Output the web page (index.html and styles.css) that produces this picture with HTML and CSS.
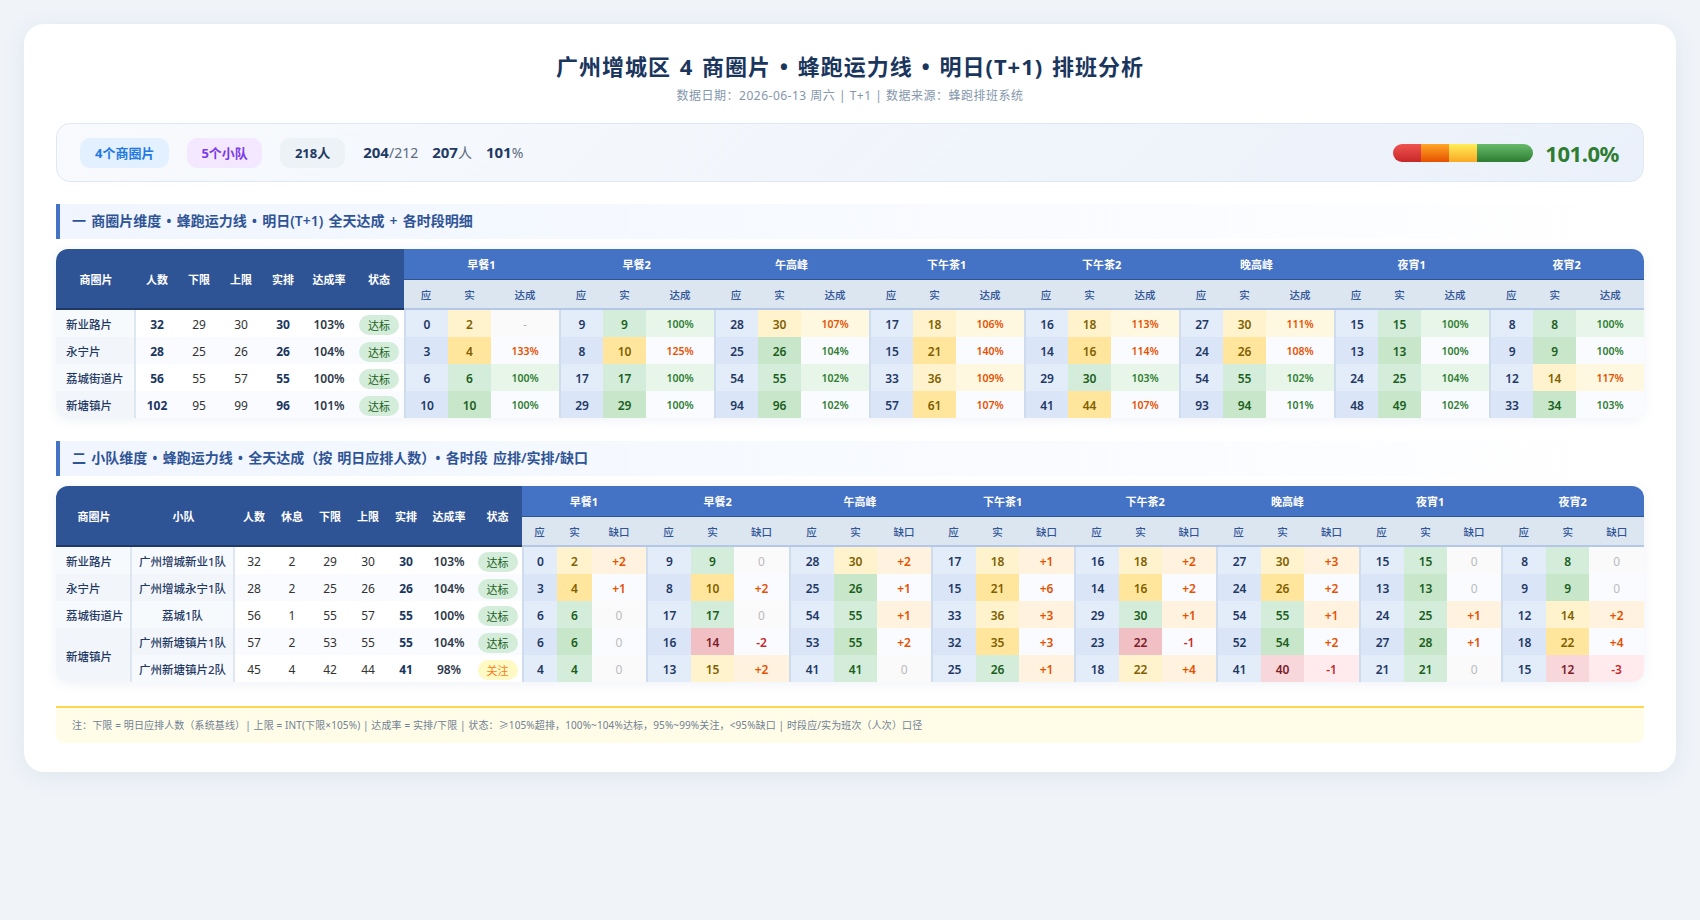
FILE: index.html
```html
<!DOCTYPE html>
<html lang="zh-CN">
<head>
<meta charset="utf-8">
<title>排班分析</title>
<link rel="stylesheet" href="styles.css">
</head>
<body>
<main class="card">
<h1 class="title">广州增城区 4 商圈片 • 蜂跑运力线 • 明日(T+1) 排班分析</h1>
<p class="subtitle">数据日期：2026-06-13 周六 | T+1 | 数据来源：蜂跑排班系统</p>

<section class="summary">
  <div class="chips">
    <span class="pill pill-blue">4个商圈片</span>
    <span class="pill pill-purple">5个小队</span>
    <span class="pill pill-gray">218人</span>
    <span class="stat"><b>204</b>/212</span>
    <span class="stat"><b>207</b>人</span>
    <span class="stat"><b>101</b>%</span>
  </div>
  <div class="gauge">
    <div class="bar"><i class="seg seg-red"></i><i class="seg seg-orange"></i><i class="seg seg-yellow"></i><i class="seg seg-green"></i></div>
    <span class="gauge-value">101.0%</span>
  </div>
</section>

<h2 class="section-title">一 商圈片维度 • 蜂跑运力线 • 明日(T+1) 全天达成 + 各时段明细</h2>
<div class="table-wrap">
<table class="grid">
<colgroup>
<col class="w80"><col class="w42"><col class="w42"><col class="w42"><col class="w42"><col class="w50"><col class="w50">
<col class="w44"><col class="w43"><col class="w68"><col class="w44"><col class="w43"><col class="w68"><col class="w44"><col class="w43"><col class="w68"><col class="w44"><col class="w43"><col class="w68"><col class="w44"><col class="w43"><col class="w68"><col class="w44"><col class="w43"><col class="w68"><col class="w44"><col class="w43"><col class="w68"><col class="w44"><col class="w43"><col class="w68">
</colgroup>
<thead>
<tr>
<th class="h-main" rowspan="2">商圈片</th><th class="h-main" rowspan="2">人数</th><th class="h-main" rowspan="2">下限</th><th class="h-main" rowspan="2">上限</th><th class="h-main" rowspan="2">实排</th><th class="h-main" rowspan="2">达成率</th><th class="h-main" rowspan="2">状态</th>
<th class="h-group" colspan="3">早餐1</th><th class="h-group" colspan="3">早餐2</th><th class="h-group" colspan="3">午高峰</th><th class="h-group" colspan="3">下午茶1</th><th class="h-group" colspan="3">下午茶2</th><th class="h-group" colspan="3">晚高峰</th><th class="h-group" colspan="3">夜宵1</th><th class="h-group" colspan="3">夜宵2</th>
</tr>
<tr>
<th class="h-sub">应</th><th class="h-sub">实</th><th class="h-sub">达成</th><th class="h-sub">应</th><th class="h-sub">实</th><th class="h-sub">达成</th><th class="h-sub">应</th><th class="h-sub">实</th><th class="h-sub">达成</th><th class="h-sub">应</th><th class="h-sub">实</th><th class="h-sub">达成</th><th class="h-sub">应</th><th class="h-sub">实</th><th class="h-sub">达成</th><th class="h-sub">应</th><th class="h-sub">实</th><th class="h-sub">达成</th><th class="h-sub">应</th><th class="h-sub">实</th><th class="h-sub">达成</th><th class="h-sub">应</th><th class="h-sub">实</th><th class="h-sub">达成</th>
</tr>
</thead>
<tbody>
<tr>
<td class="name">新业路片</td><td class="bold">32</td><td>29</td><td>30</td><td class="bold">30</td><td class="rate">103%</td><td><span class="badge ok">达标</span></td>
<td class="ying">0</td><td class="act a-y">2</td><td class="r-na">-</td>
<td class="ying">9</td><td class="act a-g">9</td><td class="r-g">100%</td>
<td class="ying">28</td><td class="act a-y">30</td><td class="r-y">107%</td>
<td class="ying">17</td><td class="act a-y">18</td><td class="r-y">106%</td>
<td class="ying">16</td><td class="act a-y">18</td><td class="r-y">113%</td>
<td class="ying">27</td><td class="act a-y">30</td><td class="r-y">111%</td>
<td class="ying">15</td><td class="act a-g">15</td><td class="r-g">100%</td>
<td class="ying">8</td><td class="act a-g">8</td><td class="r-g">100%</td>
</tr>
<tr>
<td class="name">永宁片</td><td class="bold">28</td><td>25</td><td>26</td><td class="bold">26</td><td class="rate">104%</td><td><span class="badge ok">达标</span></td>
<td class="ying">3</td><td class="act a-y">4</td><td class="r-y">133%</td>
<td class="ying">8</td><td class="act a-y">10</td><td class="r-y">125%</td>
<td class="ying">25</td><td class="act a-g">26</td><td class="r-g">104%</td>
<td class="ying">15</td><td class="act a-y">21</td><td class="r-y">140%</td>
<td class="ying">14</td><td class="act a-y">16</td><td class="r-y">114%</td>
<td class="ying">24</td><td class="act a-y">26</td><td class="r-y">108%</td>
<td class="ying">13</td><td class="act a-g">13</td><td class="r-g">100%</td>
<td class="ying">9</td><td class="act a-g">9</td><td class="r-g">100%</td>
</tr>
<tr>
<td class="name">荔城街道片</td><td class="bold">56</td><td>55</td><td>57</td><td class="bold">55</td><td class="rate">100%</td><td><span class="badge ok">达标</span></td>
<td class="ying">6</td><td class="act a-g">6</td><td class="r-g">100%</td>
<td class="ying">17</td><td class="act a-g">17</td><td class="r-g">100%</td>
<td class="ying">54</td><td class="act a-g">55</td><td class="r-g">102%</td>
<td class="ying">33</td><td class="act a-y">36</td><td class="r-y">109%</td>
<td class="ying">29</td><td class="act a-g">30</td><td class="r-g">103%</td>
<td class="ying">54</td><td class="act a-g">55</td><td class="r-g">102%</td>
<td class="ying">24</td><td class="act a-g">25</td><td class="r-g">104%</td>
<td class="ying">12</td><td class="act a-y">14</td><td class="r-y">117%</td>
</tr>
<tr>
<td class="name">新塘镇片</td><td class="bold">102</td><td>95</td><td>99</td><td class="bold">96</td><td class="rate">101%</td><td><span class="badge ok">达标</span></td>
<td class="ying">10</td><td class="act a-g">10</td><td class="r-g">100%</td>
<td class="ying">29</td><td class="act a-g">29</td><td class="r-g">100%</td>
<td class="ying">94</td><td class="act a-g">96</td><td class="r-g">102%</td>
<td class="ying">57</td><td class="act a-y">61</td><td class="r-y">107%</td>
<td class="ying">41</td><td class="act a-y">44</td><td class="r-y">107%</td>
<td class="ying">93</td><td class="act a-g">94</td><td class="r-g">101%</td>
<td class="ying">48</td><td class="act a-g">49</td><td class="r-g">102%</td>
<td class="ying">33</td><td class="act a-g">34</td><td class="r-g">103%</td>
</tr>
</tbody>
</table>
</div>

<h2 class="section-title">二 小队维度 • 蜂跑运力线 • 全天达成（按 明日应排人数）• 各时段 应排/实排/缺口</h2>
<div class="table-wrap">
<table class="grid grid-team">
<colgroup>
<col class="w76"><col class="w103"><col class="w38"><col class="w38"><col class="w38"><col class="w38"><col class="w38"><col class="w48"><col class="w49">
<col class="w35"><col class="w35"><col class="w54"><col class="w45"><col class="w43"><col class="w55"><col class="w45"><col class="w43"><col class="w54"><col class="w45"><col class="w43"><col class="w55"><col class="w45"><col class="w43"><col class="w54"><col class="w45"><col class="w43"><col class="w55"><col class="w45"><col class="w43"><col class="w54"><col class="w45"><col class="w43"><col class="w55">
</colgroup>
<thead>
<tr>
<th class="h-main" rowspan="2">商圈片</th><th class="h-main" rowspan="2">小队</th><th class="h-main" rowspan="2">人数</th><th class="h-main" rowspan="2">休息</th><th class="h-main" rowspan="2">下限</th><th class="h-main" rowspan="2">上限</th><th class="h-main" rowspan="2">实排</th><th class="h-main" rowspan="2">达成率</th><th class="h-main" rowspan="2">状态</th>
<th class="h-group" colspan="3">早餐1</th><th class="h-group" colspan="3">早餐2</th><th class="h-group" colspan="3">午高峰</th><th class="h-group" colspan="3">下午茶1</th><th class="h-group" colspan="3">下午茶2</th><th class="h-group" colspan="3">晚高峰</th><th class="h-group" colspan="3">夜宵1</th><th class="h-group" colspan="3">夜宵2</th>
</tr>
<tr>
<th class="h-sub">应</th><th class="h-sub">实</th><th class="h-sub">缺口</th><th class="h-sub">应</th><th class="h-sub">实</th><th class="h-sub">缺口</th><th class="h-sub">应</th><th class="h-sub">实</th><th class="h-sub">缺口</th><th class="h-sub">应</th><th class="h-sub">实</th><th class="h-sub">缺口</th><th class="h-sub">应</th><th class="h-sub">实</th><th class="h-sub">缺口</th><th class="h-sub">应</th><th class="h-sub">实</th><th class="h-sub">缺口</th><th class="h-sub">应</th><th class="h-sub">实</th><th class="h-sub">缺口</th><th class="h-sub">应</th><th class="h-sub">实</th><th class="h-sub">缺口</th>
</tr>
</thead>
<tbody>
<tr>
<td class="name">新业路片</td><td class="team">广州增城新业1队</td><td>32</td><td>2</td><td>29</td><td>30</td><td class="bold">30</td><td class="rate">103%</td><td><span class="badge ok">达标</span></td>
<td class="ying">0</td><td class="act a-y">2</td><td class="gap-p">+2</td>
<td class="ying">9</td><td class="act a-g">9</td><td class="gap-z">0</td>
<td class="ying">28</td><td class="act a-y">30</td><td class="gap-p">+2</td>
<td class="ying">17</td><td class="act a-y">18</td><td class="gap-p">+1</td>
<td class="ying">16</td><td class="act a-y">18</td><td class="gap-p">+2</td>
<td class="ying">27</td><td class="act a-y">30</td><td class="gap-p">+3</td>
<td class="ying">15</td><td class="act a-g">15</td><td class="gap-z">0</td>
<td class="ying">8</td><td class="act a-g">8</td><td class="gap-z">0</td>
</tr>
<tr>
<td class="name">永宁片</td><td class="team">广州增城永宁1队</td><td>28</td><td>2</td><td>25</td><td>26</td><td class="bold">26</td><td class="rate">104%</td><td><span class="badge ok">达标</span></td>
<td class="ying">3</td><td class="act a-y">4</td><td class="gap-p">+1</td>
<td class="ying">8</td><td class="act a-y">10</td><td class="gap-p">+2</td>
<td class="ying">25</td><td class="act a-g">26</td><td class="gap-p">+1</td>
<td class="ying">15</td><td class="act a-y">21</td><td class="gap-p">+6</td>
<td class="ying">14</td><td class="act a-y">16</td><td class="gap-p">+2</td>
<td class="ying">24</td><td class="act a-y">26</td><td class="gap-p">+2</td>
<td class="ying">13</td><td class="act a-g">13</td><td class="gap-z">0</td>
<td class="ying">9</td><td class="act a-g">9</td><td class="gap-z">0</td>
</tr>
<tr>
<td class="name">荔城街道片</td><td class="team">荔城1队</td><td>56</td><td>1</td><td>55</td><td>57</td><td class="bold">55</td><td class="rate">100%</td><td><span class="badge ok">达标</span></td>
<td class="ying">6</td><td class="act a-g">6</td><td class="gap-z">0</td>
<td class="ying">17</td><td class="act a-g">17</td><td class="gap-z">0</td>
<td class="ying">54</td><td class="act a-g">55</td><td class="gap-p">+1</td>
<td class="ying">33</td><td class="act a-y">36</td><td class="gap-p">+3</td>
<td class="ying">29</td><td class="act a-g">30</td><td class="gap-p">+1</td>
<td class="ying">54</td><td class="act a-g">55</td><td class="gap-p">+1</td>
<td class="ying">24</td><td class="act a-g">25</td><td class="gap-p">+1</td>
<td class="ying">12</td><td class="act a-y">14</td><td class="gap-p">+2</td>
</tr>
<tr>
<td class="name name-span" rowspan="2">新塘镇片</td><td class="team">广州新塘镇片1队</td><td>57</td><td>2</td><td>53</td><td>55</td><td class="bold">55</td><td class="rate">104%</td><td><span class="badge ok">达标</span></td>
<td class="ying">6</td><td class="act a-g">6</td><td class="gap-z">0</td>
<td class="ying">16</td><td class="act a-r">14</td><td class="gap-n">-2</td>
<td class="ying">53</td><td class="act a-g">55</td><td class="gap-p">+2</td>
<td class="ying">32</td><td class="act a-y">35</td><td class="gap-p">+3</td>
<td class="ying">23</td><td class="act a-r">22</td><td class="gap-n">-1</td>
<td class="ying">52</td><td class="act a-g">54</td><td class="gap-p">+2</td>
<td class="ying">27</td><td class="act a-g">28</td><td class="gap-p">+1</td>
<td class="ying">18</td><td class="act a-y">22</td><td class="gap-p">+4</td>
</tr>
<tr>
<td class="team">广州新塘镇片2队</td><td>45</td><td>4</td><td>42</td><td>44</td><td class="bold">41</td><td class="rate">98%</td><td><span class="badge warn">关注</span></td>
<td class="ying">4</td><td class="act a-g">4</td><td class="gap-z">0</td>
<td class="ying">13</td><td class="act a-y">15</td><td class="gap-p">+2</td>
<td class="ying">41</td><td class="act a-g">41</td><td class="gap-z">0</td>
<td class="ying">25</td><td class="act a-g">26</td><td class="gap-p">+1</td>
<td class="ying">18</td><td class="act a-y">22</td><td class="gap-p">+4</td>
<td class="ying">41</td><td class="act a-r">40</td><td class="gap-n">-1</td>
<td class="ying">21</td><td class="act a-g">21</td><td class="gap-z">0</td>
<td class="ying">15</td><td class="act a-r">12</td><td class="gap-n">-3</td>
</tr>
</tbody>
</table>
</div>

<footer class="note">注：下限 = 明日应排人数（系统基线）| 上限 = INT(下限×105%) | 达成率 = 实排/下限 | 状态：≥105%超排，100%~104%达标，95%~99%关注，&lt;95%缺口 | 时段应/实为班次（人次）口径</footer>
</main>
</body>
</html>
```

FILE: styles.css
```css
* { box-sizing: border-box; }
html, body { margin: 0; }
body {
  min-height: 920px;
  padding: 24px;
  background: #f0f4f9;
  font-family: "Noto Sans", "Noto Sans CJK SC", sans-serif;
  color: #2d3748;
}
.card {
  background: #fff;
  border-radius: 20px;
  padding: 26px 32px 29px;
  box-shadow: 0 4px 24px rgba(30, 60, 110, .08);
}
.title {
  margin: 0;
  text-align: center;
  font-size: 22px;
  line-height: 33px;
  font-weight: 700;
  letter-spacing: 1px;
  word-spacing: 2px;
  color: #1a365d;
}
.subtitle {
  margin: 4px 0 18px;
  text-align: center;
  font-size: 12px;
  line-height: 18px;
  letter-spacing: .5px;
  color: #8496ab;
}
.summary {
  display: flex;
  align-items: center;
  justify-content: space-between;
  height: 59px;
  padding: 0 24px 0 23px;
  border: 1px solid #dfe7f3;
  border-radius: 14px;
  background: linear-gradient(135deg, #f8fafd, #ebf1fa);
}
.chips { display: flex; align-items: center; }
.pill {
  display: flex;
  align-items: center;
  height: 30px;
  padding: 0 14px 1px;
  margin-right: 18px;
  border-radius: 10px;
  font-size: 13px;
  font-weight: 700;
}
.pill-blue { padding: 0 15px 1px; background: #e3f0ff; color: #2379e3; }
.pill-purple { background: #f3e8ff; color: #7c3aed; }
.pill-gray { padding: 0 15px 1px; background: #edf2f7; color: #1f3a63; }
.stat {
  margin: 0 14px 2px 0;
  font-size: 14px;
  color: #5a6b80;
}
.stat b { font-size: 15px; color: #1f3a63; }
.gauge { display: flex; align-items: center; gap: 12px; }
.bar {
  display: flex;
  width: 140px;
  height: 18px;
  border-radius: 9px;
  overflow: hidden;
}
.seg { display: block; flex: 1; }
.seg-red { background: linear-gradient(#ef5350, #c62828); }
.seg-orange { background: linear-gradient(#ffa726, #e65100); }
.seg-yellow { background: linear-gradient(#ffee58, #f9a825); }
.seg-green { flex: 2; background: linear-gradient(#66bb6a, #2e7d32); }
.gauge-value {
  font-size: 22px;
  font-weight: 700;
  letter-spacing: -.45px;
  color: #2e7d32;
}
.section-title {
  margin: 22px 0 10px;
  height: 35px;
  padding-left: 12px;
  border-left: 4px solid #4472c4;
  background: linear-gradient(90deg, #f0f5ff, #fff);
  font-size: 14px;
  font-weight: 600;
  line-height: 34px;
  word-spacing: 1.5px;
  color: #2f5496;
}
.table-wrap + .section-title { margin-top: 23px; }
.table-wrap {
  border-radius: 12px;
  overflow: hidden;
  box-shadow: 0 2px 12px rgba(47, 84, 150, .08);
}
.grid {
  width: 100%;
  table-layout: fixed;
  border-collapse: separate;
  border-spacing: 0;
  font-size: 12px;
  text-align: center;
}
.w35 { width: 35px; } .w38 { width: 38px; } .w42 { width: 42px; } .w43 { width: 43px; }
.w44 { width: 44px; } .w45 { width: 45px; } .w48 { width: 48px; } .w49 { width: 49px; }
.w50 { width: 50px; } .w54 { width: 54px; } .w55 { width: 55px; } .w68 { width: 68px; }
.w76 { width: 76px; } .w80 { width: 80px; } .w103 { width: 103px; }
th { padding: 0; font-size: 11px; font-weight: 700; }
.h-main {
  background: #2f5496;
  color: #fff;
  border-bottom: 2px solid #1f3864;
}
.h-group {
  height: 31px;
  background: #4472c4;
  color: #fff;
  border-bottom: 1px solid #2f5496;
}
.h-sub {
  height: 30px;
  padding-top: 1px;
  background: #dce6f1;
  color: #2f5496;
  font-size: 10.5px;
  font-weight: 500;
  border-bottom: 2px solid #b4c7e7;
}
td {
  height: 27px;
  padding: 1px 0 0;
  background: #fff;
  color: #333;
  white-space: nowrap;
}
tbody tr:nth-child(even) td { background: #fafbff; }
td.name {
  padding-left: 10px;
  text-align: left;
  font-size: 11.5px;
  font-weight: 500;
  color: #1f3864;
  background: #f7fafd;
  border-right: 2px solid #dde6f1;
}
tbody tr:nth-child(even) td.name { background: #f2f6fa; }
td.name-span, tbody tr:nth-child(even) td.name-span { background: #f2f6fa; }
td.team {
  font-size: 11.5px;
  font-weight: 500;
  color: #1f3864;
  background: #f7fafd;
  border-right: 2px solid #dde6f1;
}
tbody tr:nth-child(even) td.team { background: #f2f6fa; }
.grid-team tbody tr:last-child td.team { background: #f7fafd; }
td.bold { font-weight: 700; color: #1a365d; }
td.rate { font-weight: 600; color: #2d3748; }
.badge {
  display: inline-block;
  width: 40px;
  height: 20px;
  margin-top: 2px;
  border-radius: 10px;
  font-size: 11px;
  line-height: 21px;
  vertical-align: middle;
}
.ok { background: #d4edda; color: #1b5e20; }
.warn { background: #fff9c4; color: #f57f17; }
td.ying {
  border-left: 2px solid #cfdcee;
  background: #e3ecf9;
  color: #1f3864;
  font-weight: 600;
}
tbody tr:nth-child(even) td.ying { background: #dae6f7; }
td.act { font-weight: 600; }
td.a-g { background: #d4edda; color: #1b5e20; }
td.a-y { background: #fff3cd; color: #7f6000; }
td.a-r { background: #f8d7da; color: #7b1c2b; }
tbody tr:nth-child(even) td.a-g { background: #c8e6c9; }
tbody tr:nth-child(even) td.a-y { background: #ffe69c; }
tbody tr:nth-child(even) td.a-r { background: #f1c0c4; }
td.r-g, td.r-y, td.r-na { font-size: 10.5px; font-weight: 600; }
td.r-g { background: #e8f5e9; color: #2e7d32; }
td.r-y { background: #fff8e1; color: #e65100; }
td.r-na { background: #fafafa; color: #aaa; font-weight: 400; }
td.gap-p, td.gap-n { font-weight: 600; font-size: 12px; }
td.gap-z { background: #fafafa; color: #bbb; font-size: 12px; }
td.gap-p { background: #fff3e0; color: #e65100; }
td.gap-n { background: #ffebee; color: #c62828; }
tbody tr:nth-child(even) td.r-g,
tbody tr:nth-child(even) td.r-y,
tbody tr:nth-child(even) td.gap-p,
tbody tr:nth-child(even) td.gap-n,
tbody tr:nth-child(even) td.gap-z { background: #fafbff; }
.note {
  margin-top: 24px;
  height: 37px;
  padding-left: 16px;
  border-top: 2px solid #ffd54f;
  border-radius: 0 0 8px 8px;
  background: #fffde7;
  font-size: 10px;
  line-height: 35px;
  letter-spacing: .12px;
  color: #718096;
}
```
